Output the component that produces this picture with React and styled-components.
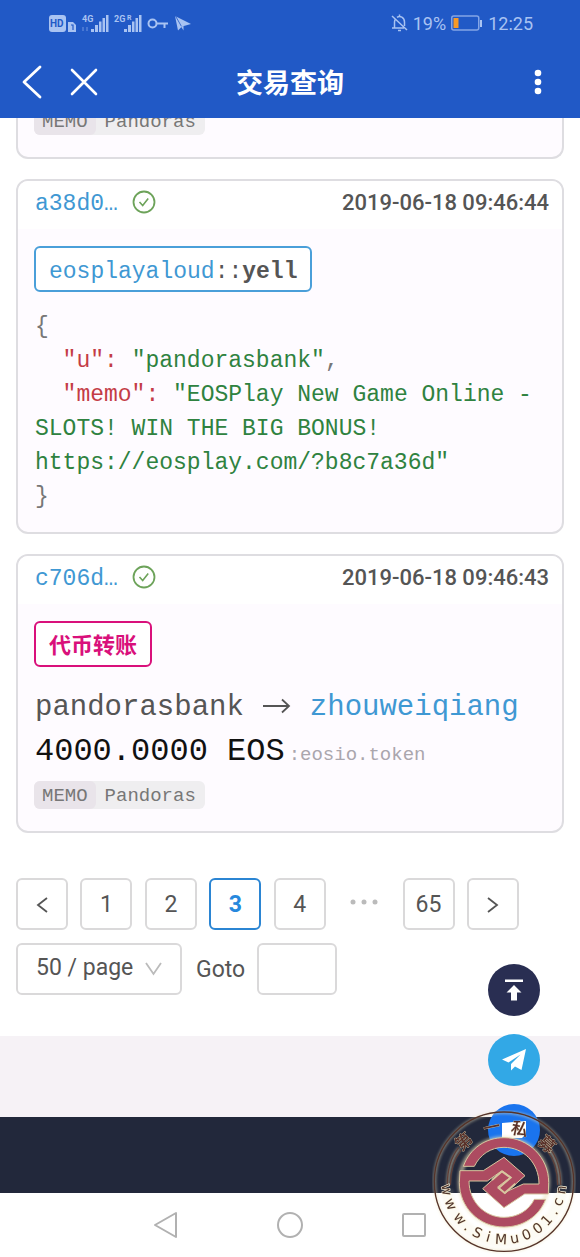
import React from "react";
import styled, { createGlobalStyle, css } from "styled-components";

const GlobalStyle = createGlobalStyle`
  *, *::before, *::after { box-sizing: border-box; }
  body {
    margin: 0;
    background: #fff;
    color: #555;
    font-family: Roboto, "Noto Sans CJK SC", sans-serif;
    font-size: 22px;
  }
  button, input, select { font: inherit; color: inherit; margin: 0; padding: 0; }
  a { color: #3f98d3; text-decoration: none; }
  svg { display: block; flex: none; }
`;

const mono = css`
  font-family: "Liberation Mono", monospace;
`;

const Page = styled.div`
  position: relative;
  min-height: 100vh;
  display: flex;
  flex-direction: column;
`;

const TopBar = styled.header`
  position: relative;
  z-index: 2;
  background: #2159c6;
  color: #fff;
`;

const StatusBar = styled.div`
  display: flex;
  justify-content: space-between;
  align-items: center;
  height: 46px;
  padding: 0 47px 0 49px;
  color: #a9c3f2;
  font-size: 18px;
`;

const StatusGroup = styled.div`
  display: flex;
  align-items: center;
  gap: 5px;
`;

const TitleBar = styled.div`
  display: grid;
  grid-template-columns: 1fr auto 1fr;
  align-items: center;
  height: 72px;
  padding: 0 16px;
`;

const Title = styled.h1`
  margin: 0;
  padding-top: 4px;
  font-size: 27px;
  line-height: 36px;
  font-weight: 700;
`;

const BarButtons = styled.div`
  display: flex;
  gap: 20px;
  justify-content: ${(p) => (p.$end ? "flex-end" : "flex-start")};
`;

const IconButton = styled.button`
  display: grid;
  place-items: center;
  width: ${(p) => p.$width || 32}px;
  height: 36px;
  border: 0;
  background: none;
`;

const Main = styled.main`
  display: flex;
  flex-direction: column;
  gap: 20px;
  padding: 0 16px 41px;
`;

const Card = styled.article`
  border: 2px solid #dedde1;
  border-radius: 12px;
  background: #fefbff;
  overflow: hidden;
  ${(p) =>
    p.$scrolled &&
    css`
      margin-top: -11px;
      border-top: 0;
      border-radius: 0 0 12px 12px;
    `}
`;

const CardHead = styled.header`
  display: flex;
  align-items: center;
  gap: 14px;
  height: 48px;
  padding: 0 13px 6px 17px;
  background: #fff;
`;

const Hash = styled.a`
  ${mono}
  padding-top: 4px;
  font-size: 23px;
`;

const Time = styled.time`
  margin-left: auto;
  font-size: 22px;
  font-weight: 500;
`;

const CardBody = styled.div`
  padding: ${(p) => (p.$scrolled ? 0 : 17)}px 16px 18px;
`;

const Tag = styled.div`
  width: fit-content;
  height: 46px;
  margin-bottom: 18px;
  padding: 2px 13px 0;
  border: 2px solid ${(p) => p.$color};
  border-radius: 6px;
  background: #fff;
  color: ${(p) => p.$color};
  font-size: 22px;
  font-weight: 700;
  line-height: 42px;
`;

const Action = styled.span`
  ${mono}
  color: #555;
  font-size: 23px;
  font-weight: 400;
`;

const Json = styled.pre`
  ${mono}
  margin: 0;
  padding-left: 1px;
  font-size: 23px;
  line-height: 34px;
  white-space: pre-wrap;
  color: #777;
`;

const JsonLine = styled.div``;

const Key = styled.span`
  color: #c43c46;
`;

const Value = styled.span`
  color: #2f8240;
`;

const Transfer = styled.div`
  ${mono}
  display: flex;
  align-items: center;
  gap: 18px;
  padding-left: 1px;
  font-size: 29px;
  line-height: 46px;
`;

const Amount = styled.div`
  ${mono}
  padding-left: 1px;
  font-size: 32px;
  line-height: 42px;
  color: #111;
`;

const Contract = styled.span`
  margin-left: 4px;
  font-size: 19px;
  color: #aaa6ad;
`;

const Memo = styled.div`
  ${mono}
  display: flex;
  width: fit-content;
  margin: ${(p) => (p.$scrolled ? 0 : 5)}px 0 4px;
  border-radius: 6px;
  background: #efeef0;
  font-size: 19px;
  line-height: 26px;
  color: #777;
`;

const MemoLabel = styled.span`
  padding: 2px 8px 0;
  border-radius: 6px;
  background: #e9e4ea;
`;

const MemoText = styled.span`
  padding: 2px 9px 0;
`;

const Pagination = styled.nav`
  display: flex;
  flex-direction: column;
  gap: 13px;
  max-width: 503px;
  margin-top: 25px;
`;

const Pages = styled.div`
  display: flex;
  justify-content: space-between;
`;

const frame = css`
  height: 52px;
  border: 2px solid #dad9da;
  border-radius: 6px;
  background: #fff;
`;

const PageButton = styled.button`
  ${frame}
  display: grid;
  place-items: center;
  width: 52px;
  font-size: 23px;
  ${(p) =>
    p.$active &&
    css`
      border-color: #2b85d3;
      color: #2688dd;
      font-weight: 700;
    `}
`;

const Dots = styled.span`
  display: grid;
  place-items: center;
  width: 52px;
  padding-bottom: 4px;
`;

const Options = styled.div`
  display: flex;
  align-items: center;
  gap: 14px;
`;

const SelectBox = styled.div`
  display: grid;
  align-items: center;

  > * { grid-area: 1 / 1; }
  > svg { justify-self: end; margin-right: 20px; pointer-events: none; }
`;

const Select = styled.select`
  ${frame}
  appearance: none;
  width: 166px;
  padding: 0 0 3px 18px;
  font-size: 23px;
`;

const Goto = styled.label`
  display: flex;
  align-items: center;
  gap: 12px;
  font-size: 23px;
`;

const GotoInput = styled.input`
  ${frame}
  width: 80px;
  padding: 0 10px;
`;

const Gap = styled.div`
  height: 81px;
  background: #f6f2f6;
`;

const Footer = styled.footer`
  height: 76px;
  background: #22283b;
`;

const SystemNav = styled.nav`
  display: flex;
  justify-content: center;
  gap: 88px;
  height: 64px;
  padding-top: 14px;
`;

const Floating = styled.div`
  position: fixed;
  right: 40px;
  bottom: 101px;
  display: flex;
  flex-direction: column;
  gap: 18px;
`;

const Round = styled.button`
  display: grid;
  place-items: center;
  width: 52px;
  height: 52px;
  border: 0;
  border-radius: 50%;
  background: ${(p) => p.$color};
`;

const Seal = styled.svg`
  position: fixed;
  right: 4px;
  bottom: 3px;
  pointer-events: none;
`;

const StatusText = styled.text`
  font-family: Roboto, sans-serif;
  font-weight: 700;
`;

const SignalIcons = () => (
  <svg width="143" height="22" viewBox="0 0 143 22" fill="#a9c3f2">
    <rect x="0" y="3" width="17" height="17" rx="3" />
    <StatusText x="1" y="15" fontSize="10" fill="#2159c6">HD</StatusText>
    <path d="M19 10h5l3 3v7h-8z" />
    <path d="M22 13h2v5" fill="none" stroke="#2159c6" strokeWidth="1.2" />
    <StatusText x="33" y="10" fontSize="9">4G</StatusText>
    <path d="M34 15v4M38 15v4" stroke="#7397e0" fill="none" />
    <path d="M42 17h3v3h-3zM46 13h3v7h-3zM50 9.500h2.500v10.500h-2.500zM53.500 6h2.500v14h-2.500zM57 3h2.500v17h-2.500z" />
    <StatusText x="65" y="10" fontSize="9">2G</StatusText>
    <StatusText x="78" y="8" fontSize="7">R</StatusText>
    <path d="M75 17h3v3h-3zM79 13h3v7h-3zM83 9.500h2.500v10.500h-2.500zM86.500 6h2.500v14h-2.500zM90 3h2.500v17h-2.500z" />
    <g fill="none" stroke="#a9c3f2" strokeWidth="2">
      <circle cx="103.500" cy="11.500" r="4" />
      <path d="M108 11.500h11M115.500 12v4" />
    </g>
    <path d="M126 4l16 8-9 2.500-4 4z" />
    <path d="M126.500 4l6 10.500" stroke="#2159c6" strokeWidth="0.800" fill="none" />
    <path d="M132 14.500l2.500 4v-4.500z" />
  </svg>
);

const BellOff = () => (
  <svg width="17" height="18" viewBox="0 0 17 18" fill="none" stroke="#a9c3f2" strokeWidth="1.5">
    <path d="M1 2l15 14M3.500 14V8c0-1.500.5-2.500 1.200-3.300M6 3.300c3-2 7.500 0 7.500 4.700v4M1 14h12M8.500 3V.5M7 16.500h3" />
  </svg>
);

const Battery = () => (
  <svg width="32" height="16" viewBox="0 0 32 16">
    <rect x="0.750" y="1" width="27" height="14" rx="2" fill="none" stroke="#84a5e6" strokeWidth="1.500" />
    <rect x="2.500" y="3" width="5" height="10" fill="#f79a28" />
    <rect x="29" y="5" width="2" height="7" fill="#a9c3f2" />
  </svg>
);

const CheckCircle = () => (
  <svg width="24" height="24" viewBox="0 0 24 24" fill="none" stroke="#6da35a">
    <circle cx="12" cy="12" r="10.500" strokeWidth="1.800" />
    <path d="M7.500 12l3.200 3.500 5.500-7" strokeWidth="1.600" />
  </svg>
);

const ArrowRight = () => (
  <svg width="30" height="20" viewBox="0 0 30 20" fill="none" stroke="#555" strokeWidth="1.800">
    <path d="M1 8h26M20 1.500L27 8l-7 6.500" />
  </svg>
);

const Chevron = ({ d }) => (
  <svg width="14" height="20" viewBox="0 0 14 20" fill="none" stroke="#555" strokeWidth="1.800">
    <path d={d} />
  </svg>
);

const SITE = "www.SiMu001.cn";
const SITE_ANGLES = [82, 67, 50, 39, 27.6, 15.6, 3, -10.5, -23, -36, -48, -59, -69.6, -82];
const HALF_WIDTHS = { w: 17, ".": 7, S: 13, i: 6, M: 18, u: 13, 0: 13, 1: 13, c: 12, n: 13 };

const sitePoints = SITE.split("").map((ch, i) => {
  const a = (SITE_ANGLES[i] * Math.PI) / 180;
  const half = HALF_WIDTHS[ch];
  return {
    x: Math.round(252 - 187 * Math.sin(a) - half * Math.cos(a)),
    y: Math.round(275 + 187 * Math.cos(a) - half * Math.sin(a)),
  };
});

const SealChar = styled.text`
  font-family: "Noto Sans CJK SC", sans-serif;
  font-size: 50px;
  font-weight: 500;
  text-anchor: middle;
  fill: #592f28;
  stroke: #cfc5a4;
  stroke-width: 2px;
  paint-order: stroke;
`;

const SealSite = styled.text`
  font-family: "DejaVu Sans", sans-serif;
  font-size: 42px;
  fill: #50352c;
  stroke: #fbf5dc;
  stroke-width: 4px;
  paint-order: stroke;
`;

const PIECE_TOP =
  "M130 229C150 174 198 143 252 143C326 143 386 203 386 277L385 312L314 312L252 353L188 296L246 244L272 264L236 294L253 308L310 282L357 282C357 218 310 172 252 172C212 172 180 194 163 229Z";
const PIECE_BOTTOM =
  "M120 242L190 242L252 202L315 257L256 310L233 291L272 261L246 242L202 273L147 273C147 335 194 382 252 382C292 382 326 362 343 328L377 328C356 382 306 411 252 411C176 411 118 351 118 277Z";

const SealMark = () => (
  <Seal width="144" height="144" viewBox="36 60 432 432" role="img" aria-label="第一私募 www.SiMu001.cn">
    <defs>
      <filter id="glow" x="-20%" y="-20%" width="140%" height="140%">
        <feGaussianBlur stdDeviation="4" />
      </filter>
    </defs>
    <g fill="none" stroke="#eee4bd" opacity="0.55" filter="url(#glow)">
      <circle cx="252" cy="275" r="208" strokeWidth="8" />
      <circle cx="252" cy="277" r="132" strokeWidth="14" />
      <path d="M84 285C84 235 95 202 119 174M420 285C420 235 407 202 385 174" strokeWidth="10" />
      <path d="M80 300A173 173 0 0 0 424 300" strokeWidth="36" opacity="0.3" />
    </g>
    <circle cx="252" cy="275" r="209" fill="none" stroke="#553329" strokeWidth="4" />
    <g fill="none" stroke="#604039" strokeWidth="4">
      <path d="M82 285C82 235 94 200 116 173M91 285C91 237 101 208 123 181" />
      <path d="M422 285C422 235 410 200 388 173M413 285C413 237 403 208 381 181" />
    </g>
    <g fill="#ad4b61" stroke="#d7c69f" strokeWidth="3" strokeLinejoin="round">
      <path d={PIECE_TOP} />
      <path d={PIECE_BOTTOM} />
    </g>
    <path
      d="M246 244L272 263L236 294L254 309L286 281M246 244L216 270"
      fill="none"
      stroke="#d7c69f"
      strokeWidth="6"
    />
    <SealChar transform="translate(143 168) rotate(-42)">第</SealChar>
    <SealChar transform="translate(219 129) rotate(-12)">一</SealChar>
    <SealChar transform="translate(295 134) rotate(12)">私</SealChar>
    <SealChar transform="translate(369 176) rotate(42)">募</SealChar>
    <SealSite
      x={sitePoints.map((p) => p.x).join(" ")}
      y={sitePoints.map((p) => p.y).join(" ")}
      rotate={SITE_ANGLES.join(" ")}
    >
      {SITE}
    </SealSite>
  </Seal>
);

const MemoRow = ({ scrolled }) => (
  <Memo $scrolled={scrolled}>
    <MemoLabel>MEMO</MemoLabel>
    <MemoText>Pandoras</MemoText>
  </Memo>
);

const TransactionHead = ({ hash, time }) => (
  <CardHead>
    <Hash href="#tx">{hash}</Hash>
    <CheckCircle />
    <Time>{time}</Time>
  </CardHead>
);

export default function App() {
  return (
    <Page>
      <GlobalStyle />
      <TopBar>
        <StatusBar>
          <SignalIcons />
          <StatusGroup>
            <BellOff />
            <span>19%</span>
            <Battery />
            <span>12:25</span>
          </StatusGroup>
        </StatusBar>
        <TitleBar>
          <BarButtons>
            <IconButton aria-label="返回">
              <svg width="20" height="34" viewBox="0 0 20 34" fill="none" stroke="#fff" strokeWidth="2.800" strokeLinecap="round" strokeLinejoin="round">
                <path d="M18 2L2 17l16 15" />
              </svg>
            </IconButton>
            <IconButton aria-label="关闭">
              <svg width="28" height="28" viewBox="0 0 28 28" stroke="#fff" strokeWidth="2.600" strokeLinecap="round">
                <path d="M2 2l24 24M26 2L2 26" />
              </svg>
            </IconButton>
          </BarButtons>
          <Title>交易查询</Title>
          <BarButtons $end>
            <IconButton aria-label="更多" $width={52}>
              <svg width="8" height="26" viewBox="0 0 8 26" fill="#fff">
                <circle cx="4" cy="4" r="3.300" />
                <circle cx="4" cy="13" r="3.300" />
                <circle cx="4" cy="22" r="3.300" />
              </svg>
            </IconButton>
          </BarButtons>
        </TitleBar>
      </TopBar>

      <Main>
        <Card $scrolled>
          <CardBody $scrolled>
            <MemoRow scrolled />
          </CardBody>
        </Card>

        <Card>
          <TransactionHead hash="a38d0…" time="2019-06-18 09:46:44" />
          <CardBody>
            <Tag $color="#4a9fd9">
              <Action>
                <a href="#account">eosplayaloud</a>::<b>yell</b>
              </Action>
            </Tag>
            <Json>
              <JsonLine>{"{"}</JsonLine>
              <JsonLine>
                {"  "}
                <Key>"u":</Key> <Value>"pandorasbank"</Value>,
              </JsonLine>
              <JsonLine>
                {"  "}
                <Key>"memo":</Key>{" "}
                <Value>"EOSPlay New Game Online - SLOTS! WIN THE BIG BONUS! https://eosplay.com/?b8c7a36d"</Value>
              </JsonLine>
              <JsonLine>{"}"}</JsonLine>
            </Json>
          </CardBody>
        </Card>

        <Card>
          <TransactionHead hash="c706d…" time="2019-06-18 09:46:43" />
          <CardBody>
            <Tag $color="#d9107b">代币转账</Tag>
            <Transfer>
              <span>pandorasbank</span>
              <ArrowRight />
              <a href="#account">zhouweiqiang</a>
            </Transfer>
            <Amount>
              4000.0000 EOS<Contract>:eosio.token</Contract>
            </Amount>
            <MemoRow />
          </CardBody>
        </Card>

        <Pagination aria-label="分页">
          <Pages>
            <PageButton aria-label="上一页">
              <Chevron d="M12 4L3 11l9 7" />
            </PageButton>
            <PageButton>1</PageButton>
            <PageButton>2</PageButton>
            <PageButton $active aria-current="page">3</PageButton>
            <PageButton>4</PageButton>
            <Dots>
              <svg width="30" height="6" viewBox="0 0 30 6" fill="#bbb">
                <circle cx="4" cy="3" r="2.500" />
                <circle cx="15" cy="3" r="2.500" />
                <circle cx="26" cy="3" r="2.500" />
              </svg>
            </Dots>
            <PageButton>65</PageButton>
            <PageButton aria-label="下一页">
              <Chevron d="M2 4l9 7-9 7" />
            </PageButton>
          </Pages>
          <Options>
            <SelectBox>
              <Select aria-label="每页条数" defaultValue="50">
                <option value="50">50 / page</option>
              </Select>
              <svg width="17" height="14" viewBox="0 0 17 14" fill="none" stroke="#bbb" strokeWidth="1.800">
                <path d="M1 1l7.500 11L16 1" />
              </svg>
            </SelectBox>
            <Goto>
              Goto
              <GotoInput type="text" />
            </Goto>
          </Options>
        </Pagination>
      </Main>

      <Gap />
      <Footer />
      <SystemNav aria-label="系统导航">
        <IconButton $width={36} aria-label="后退">
          <svg width="24" height="28" viewBox="0 0 24 28" fill="none" stroke="#b1b1b1" strokeWidth="2" strokeLinejoin="round">
            <path d="M22 2v24L1 14z" />
          </svg>
        </IconButton>
        <IconButton $width={36} aria-label="主页">
          <svg width="28" height="28" viewBox="0 0 28 28" fill="none" stroke="#b1b1b1" strokeWidth="2">
            <circle cx="14" cy="14" r="12" />
          </svg>
        </IconButton>
        <IconButton $width={36} aria-label="最近任务">
          <svg width="26" height="26" viewBox="0 0 26 26" fill="none" stroke="#b1b1b1" strokeWidth="2">
            <rect x="2" y="2" width="22" height="22" rx="1" />
          </svg>
        </IconButton>
      </SystemNav>

      <Floating>
        <Round $color="#292e52" aria-label="返回顶部">
          <svg width="20" height="24" viewBox="0 0 20 24" fill="#fff">
            <path d="M1 1.500h18v2.500H1zM10 7l7.500 7.500H13V22.500H7V14.500H2.500z" />
          </svg>
        </Round>
        <Round $color="#32a8e6" aria-label="Telegram">
          <svg width="26" height="24" viewBox="0 0 26 24" fill="#fff">
            <path d="M25 1L1 11.500l6.500 3L19.500 6.500 10 16v6.500l4-4 6.500 3.500z" />
          </svg>
        </Round>
        <Round $color="#1a74ee" aria-label="帮助">
          <svg width="26" height="20" viewBox="0 0 26 20" fill="#fff">
            <path d="M1 3l24-2v13l-4 4H1z" />
          </svg>
        </Round>
      </Floating>
      <SealMark />
    </Page>
  );
}
